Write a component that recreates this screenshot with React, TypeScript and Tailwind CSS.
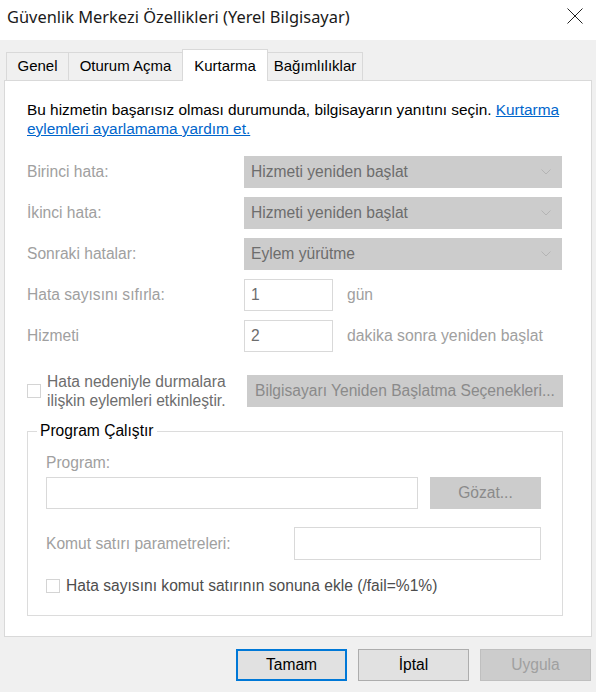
import React from "react";

function Chevron() {
  return (
    <svg width="10" height="6" viewBox="0 0 10 6" className="shrink-0">
      <path d="M0.5 0.5 L5 5 L9.5 0.5" fill="none" stroke="#b4b4b4" strokeWidth="1" />
    </svg>
  );
}

function Select({ value }: { value: string }) {
  return (
    <div className="flex h-[32px] w-[318px] items-center justify-between bg-[#cccccc] pl-[7px] pr-[11px] text-[15.6px] text-[#6d6d6d]">
      <span>{value}</span>
      <Chevron />
    </div>
  );
}

function Box({ className = "", value = "" }: { className?: string; value?: string }) {
  return (
    <div className={`flex h-[32px] items-center border border-[#d9d9d9] bg-white pl-[6px] text-[15.6px] text-[#6d6d6d] ${className}`}>
      {value}
    </div>
  );
}

function Check() {
  return <div className="h-[14px] w-[14px] shrink-0 border border-[#d4d4d4] bg-white" />;
}

function Tab({ label, width, active = false }: { label: string; width: string; active?: boolean }) {
  return active ? (
    <div className={`relative z-10 -mb-px flex h-[32px] items-start justify-center border border-b-0 border-[#d9d9d9] bg-white pt-[5px] text-[15px] text-black ${width}`}>
      {label}
    </div>
  ) : (
    <div className={`flex h-[28px] items-center justify-center border border-b-0 border-[#d9d9d9] text-[15px] text-black ${width}`}>
      {label}
    </div>
  );
}

function WinButton({ label, variant = "normal" }: { label: string; variant?: "default" | "normal" | "disabled" }) {
  const styles = {
    default: "border-2 border-[#0078d7] bg-[#e1e1e1] text-black",
    normal: "border border-[#adadad] bg-[#e1e1e1] text-black",
    disabled: "border border-[#bfbfbf] bg-[#cccccc] text-[#a0a0a0]",
  }[variant];
  return (
    <div className={`flex h-[32px] w-[111px] items-center justify-center text-[15.6px] ${styles}`}>
      {label}
    </div>
  );
}

export default function App() {
  const labels = "w-[217px] shrink-0 text-[15.6px] text-[#a0a0a0]";
  return (
    <div className="flex h-[692px] w-[596px] flex-col bg-[#f0f0f0] font-['Liberation_Sans',Arial,sans-serif]">
      {/* title bar */}
      <div className="flex h-[40px] items-start justify-between bg-white pl-[7px] pr-[13px] pt-[6px]">
        <span className="font-['Noto_Sans',sans-serif] text-[16.4px] leading-[22px] text-[#1a1a1a]">
          Güvenlik Merkezi Özellikleri (Yerel Bilgisayar)
        </span>
        <svg width="16" height="16" viewBox="0 0 16 16" className="mt-[2px]">
          <path d="M0.5 0.5 L15.5 15.5 M15.5 0.5 L0.5 15.5" stroke="#222" strokeWidth="1" fill="none" />
        </svg>
      </div>

      {/* tabs */}
      <div className="flex h-[40px] items-end pl-[6px]">
        <Tab label="Genel" width="w-[63px]" />
        <Tab label="Oturum Açma" width="-ml-px w-[115px]" />
        <Tab label="Kurtarma" active width="-ml-px w-[86px]" />
        <Tab label="Bağımlılıklar" width="-ml-px w-[96px]" />
      </div>

      {/* panel */}
      <div className="mx-[4px] flex h-[557px] flex-col border border-[#d9d9d9] bg-white pl-[22px] pr-[28px] pt-[19px]">
        <p className="text-[15.4px] leading-[19px] text-black">
          Bu hizmetin başarısız olması durumunda, bilgisayarın yanıtını seçin.{" "}
          <span className="text-[#0066cc] underline">Kurtarma eylemleri ayarlamama yardım et.</span>
        </p>

        <div className="mt-[18px] flex flex-col gap-[9px]">
          <div className="flex items-center">
            <span className={labels}>Birinci hata:</span>
            <Select value="Hizmeti yeniden başlat" />
          </div>
          <div className="flex items-center">
            <span className={labels}>İkinci hata:</span>
            <Select value="Hizmeti yeniden başlat" />
          </div>
          <div className="flex items-center">
            <span className={labels}>Sonraki hatalar:</span>
            <Select value="Eylem yürütme" />
          </div>
          <div className="flex items-center">
            <span className={labels}>Hata sayısını sıfırla:</span>
            <Box className="w-[89px]" value="1" />
            <span className="ml-[14px] text-[15.6px] text-[#a0a0a0]">gün</span>
          </div>
          <div className="flex items-center">
            <span className={labels}>Hizmeti</span>
            <Box className="w-[89px]" value="2" />
            <span className="ml-[14px] text-[15.8px] text-[#a0a0a0]">dakika sonra yeniden başlat</span>
          </div>
        </div>

        <div className="mt-[20px] flex h-[38px] items-center">
          <Check />
          <span className="ml-[6px] text-[15.6px] leading-[19px] text-[#6d6d6d]">
            Hata nedeniyle durmalara
            <br />
            ilişkin eylemleri etkinleştir.
          </span>
          <div className="ml-auto flex h-[32px] w-[316px] items-center justify-center bg-[#cccccc] text-[15.6px] text-[#8a8a8a]">
            Bilgisayarı Yeniden Başlatma Seçenekleri...
          </div>
        </div>

        <fieldset className="mt-[12px] border border-[#dcdcdc] pb-[20px] pl-[18px] pr-[21px]">
          <legend className="-ml-[9px] px-[3px] text-[15.6px] leading-[18px] text-black">Program Çalıştır</legend>
          <div className="mt-[14px] text-[15.6px] leading-[18px] text-[#a0a0a0]">Program:</div>
          <div className="mt-[5px] flex items-center gap-[12px]">
            <Box className="flex-1" />
            <div className="flex h-[32px] w-[111px] items-center justify-center bg-[#cccccc] text-[15.6px] text-[#8a8a8a]">
              Gözat...
            </div>
          </div>
          <div className="mt-[18px] flex items-center">
            <span className="text-[15.6px] text-[#a0a0a0]">Komut satırı parametreleri:</span>
            <Box className="ml-auto h-[33px] w-[247px]" />
          </div>
          <div className="mt-[17px] flex h-[18px] items-center">
            <Check />
            <span className="ml-[6px] text-[15.6px] leading-[18px] text-[#4d4d4d]">
              Hata sayısını komut satırının sonuna ekle (/fail=%1%)
            </span>
          </div>
        </fieldset>
      </div>

      {/* buttons */}
      <div className="mt-[12px] flex justify-end gap-[11px] pr-[5px]">
        <WinButton label="Tamam" variant="default" />
        <WinButton label="İptal" />
        <WinButton label="Uygula" variant="disabled" />
      </div>
    </div>
  );
}
